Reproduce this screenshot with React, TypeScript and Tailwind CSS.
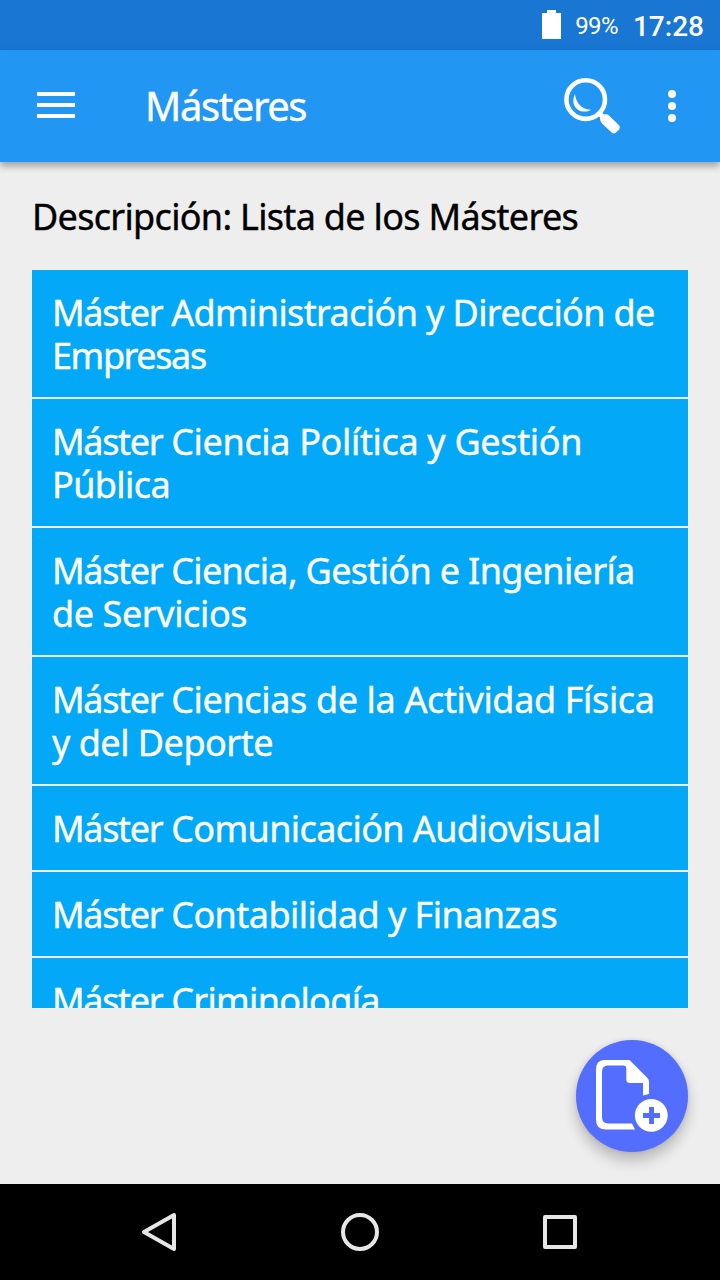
import type { ReactNode } from 'react';

type Line = { text: string; tracking: string };

const PREFIX = 'Máster ';

const rows: Line[][] = [
  [
    { text: 'Máster Administración y Dirección de', tracking: 'tracking-[-0.62px]' },
    { text: 'Empresas', tracking: 'tracking-[-1.4px]' },
  ],
  [
    { text: 'Máster Ciencia Política y Gestión', tracking: 'tracking-[-0.34px]' },
    { text: 'Pública', tracking: 'tracking-[-0.6px]' },
  ],
  [
    { text: 'Máster Ciencia, Gestión e Ingeniería', tracking: 'tracking-[-0.66px]' },
    { text: 'de Servicios', tracking: 'tracking-[-0.4px]' },
  ],
  [
    { text: 'Máster Ciencias de la Actividad Física', tracking: 'tracking-[-0.36px]' },
    { text: 'y del Deporte', tracking: 'tracking-[-0.5px]' },
  ],
  [{ text: 'Máster Comunicación Audiovisual', tracking: 'tracking-[-0.6px]' }],
  [{ text: 'Máster Contabilidad y Finanzas', tracking: 'tracking-[-0.54px]' }],
  [{ text: 'Máster Criminología', tracking: 'tracking-[-0.66px]' }],
];

function StatusBar() {
  return (
    <div className="flex h-[50px] shrink-0 items-center justify-end bg-[#1976d2] pr-4 font-['Roboto',sans-serif] text-white">
      <svg className="mr-[14px] mb-px h-[29px] w-[19px]" viewBox="0 0 19 29" fill="currentColor">
        <path d="M5 0h9v3h5v26H0V3h5z" />
      </svg>
      <span className="mr-[15px] pt-[2px] text-[24px] leading-none tracking-[-0.6px]">99%</span>
      <span className="pt-[3px] text-[28px] leading-none font-medium">17:28</span>
    </div>
  );
}

function AppBar() {
  return (
    <header className="z-10 flex h-28 shrink-0 items-center bg-[#2196f3] text-white shadow-[0_4px_7px_rgba(0,0,0,0.33)]">
      <button aria-label="Menú" className="mb-[2px] ml-[37px] flex h-[26px] w-[38px] flex-col justify-between">
        <span className="h-1 w-full bg-white" />
        <span className="h-1 w-full bg-white" />
        <span className="h-1 w-full bg-white" />
      </button>
      <h1 className="ml-[70px] flex-1 text-[40px] leading-[48px] tracking-[-1.4px] whitespace-nowrap [-webkit-text-stroke:0.4px_currentColor]">
        Másteres
      </h1>
      <button aria-label="Buscar" className="mr-[46px] h-[58px] w-[58px]">
        <svg viewBox="0 0 58 58" fill="none">
          <circle cx="21.7" cy="22.6" r="19.3" stroke="white" strokeWidth="4.6" />
          <path d="M11 17C5.500 28 14.500 39 27.500 32.700C19.500 32.900 12 27.500 11 17Z" fill="white" />
          <path d="M36 38.500L41 37.200Q43.500 37 45 38.400L55 48.200Q56.900 50.200 55.200 52.400L52 55.600Q49.800 57.400 47.600 55.600L38 46.500Q36 44.500 36 42Z" fill="white" />
          <path d="M34 35L39 40" stroke="white" strokeWidth="5" />
        </svg>
      </button>
      <button aria-label="Más opciones" className="mr-11 flex flex-col gap-1">
        <span className="size-2 rounded-full bg-white" />
        <span className="size-2 rounded-full bg-white" />
        <span className="size-2 rounded-full bg-white" />
      </button>
    </header>
  );
}

function Row({ lines }: { lines: Line[] }) {
  return (
    <li className="border-b-2 border-[#eeeeee] bg-[#03a9f7] pt-[21px] pb-5 pl-5">
      {lines.map(({ text, tracking }) => (
        <div
          key={text}
          className={`h-[43px] text-[36px] leading-[43px] whitespace-pre text-white [-webkit-text-stroke:0.4px_currentColor] ${tracking}`}
        >
          {text.startsWith(PREFIX) ? (
            <>
              <span className="tracking-[-1.35px] [word-spacing:1px]">{PREFIX}</span>
              {text.slice(PREFIX.length)}
            </>
          ) : (
            text
          )}
        </div>
      ))}
    </li>
  );
}

function NavButton({ label, children }: { label: string; children: ReactNode }) {
  return (
    <button aria-label={label} className="size-[60px]">
      <svg viewBox="0 0 60 60" fill="none" stroke="#e6e6e6" strokeWidth="4" strokeLinejoin="round">
        {children}
      </svg>
    </button>
  );
}

export default function App() {
  return (
    <div className="flex h-[1280px] w-[720px] flex-col overflow-hidden bg-[#eeeeee] font-['Noto_Sans',sans-serif]">
      <StatusBar />
      <AppBar />
      <main className="flex flex-1 flex-col px-8">
        <p className="mt-[33px] h-[43px] text-[36px] leading-[43px] tracking-[-0.69px] whitespace-nowrap text-black [-webkit-text-stroke:0.4px_currentColor]">
          Descripción: Lista de los Másteres
        </p>
        <ul className="mt-8 h-[738px] overflow-hidden">
          {rows.map((lines) => (
            <Row key={lines[0].text} lines={lines} />
          ))}
        </ul>
        <button
          aria-label="Añadir máster"
          className="mt-8 flex size-28 self-end rounded-full bg-[#536dfe] shadow-[0_9px_14px_rgba(0,0,0,0.22),0_0_5px_rgba(0,0,0,0.1)]"
        >
          <svg viewBox="0 0 112 112" fill="none">
            <path
              fillRule="evenodd"
              d="M28 20H53.500L71 37.500Q73 39.500 73 42V54L67 55.500V43H54Q50.300 43 50.300 39.500V28Q50.300 25.500 48 25.500H31.500Q26 25.500 26 32V77Q26 83.500 32 83.500H56L59 89.500H30Q20 89.500 20 80V30Q20 20 28 20Z"
              fill="white"
            />
            <circle cx="75.300" cy="75.300" r="18" fill="#536dfe" />
            <circle cx="75.300" cy="75.300" r="16.400" fill="white" />
            <path d="M67 75.500H84M75.500 67V84" stroke="#536dfe" strokeWidth="5" />
          </svg>
        </button>
      </main>
      <nav className="flex h-24 shrink-0 items-center justify-center gap-[140px] bg-black">
        <NavButton label="Atrás">
          <path d="M44 13L14 30L44 47Z" />
        </NavButton>
        <NavButton label="Inicio">
          <circle cx="30" cy="30" r="17" />
        </NavButton>
        <NavButton label="Recientes">
          <rect x="15" y="15" width="30" height="30" />
        </NavButton>
      </nav>
    </div>
  );
}
